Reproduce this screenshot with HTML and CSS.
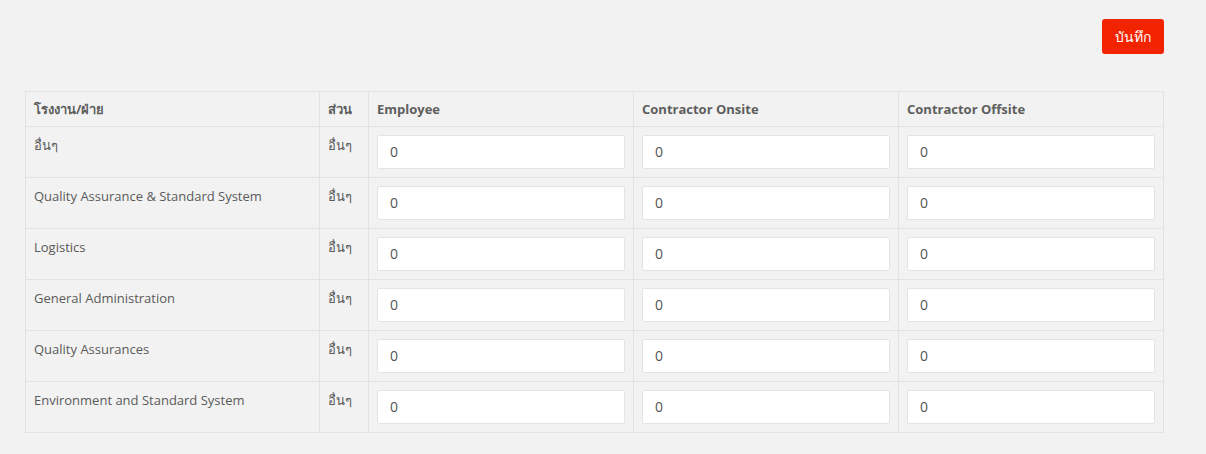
FILE: index.html
```html
<!DOCTYPE html>
<html lang="th">
<head>
<meta charset="utf-8">
<link rel="stylesheet" href="styles.css">
</head>
<body>
<div class="page">
  <div class="toolbar">
    <button class="btn-save">บันทึก</button>
  </div>
  <table class="grid">
    <colgroup>
      <col class="c-dept"><col class="c-part"><col class="c-num"><col class="c-num"><col class="c-num">
    </colgroup>
    <thead>
      <tr><th>โรงงาน/ฝ่าย</th><th>ส่วน</th><th>Employee</th><th>Contractor Onsite</th><th>Contractor Offsite</th></tr>
    </thead>
    <tbody>
      <tr><td>อื่นๆ</td><td>อื่นๆ</td><td><input class="field" value="0"></td><td><input class="field" value="0"></td><td><input class="field" value="0"></td></tr>
      <tr><td>Quality Assurance &amp; Standard System</td><td>อื่นๆ</td><td><input class="field" value="0"></td><td><input class="field" value="0"></td><td><input class="field" value="0"></td></tr>
      <tr><td>Logistics</td><td>อื่นๆ</td><td><input class="field" value="0"></td><td><input class="field" value="0"></td><td><input class="field" value="0"></td></tr>
      <tr><td>General Administration</td><td>อื่นๆ</td><td><input class="field" value="0"></td><td><input class="field" value="0"></td><td><input class="field" value="0"></td></tr>
      <tr><td>Quality Assurances</td><td>อื่นๆ</td><td><input class="field" value="0"></td><td><input class="field" value="0"></td><td><input class="field" value="0"></td></tr>
      <tr><td>Environment and Standard System</td><td>อื่นๆ</td><td><input class="field" value="0"></td><td><input class="field" value="0"></td><td><input class="field" value="0"></td></tr>
    </tbody>
  </table>
</div>
</body>
</html>
```
FILE: styles.css
```css
html, body {
  margin: 0;
  padding: 0;
  background: #f2f2f2;
}
body {
  font-family: "Open Sans", "Noto Sans", "DejaVu Sans", sans-serif;
  font-size: 13px;
  line-height: 20px;
  color: #5a5a5a;
}
.page {
  padding: 19px 42px 20px 25px;
}
.toolbar {
  display: flex;
  justify-content: flex-end;
  margin-bottom: 37px;
}
.btn-save {
  width: 62px;
  height: 35px;
  background: #f22400;
  color: #fff;
  border: none;
  border-radius: 3px;
  font-family: inherit;
  font-size: 14px;
  padding: 0;
}
.grid {
  width: 100%;
  border-collapse: collapse;
  table-layout: fixed;
  border: 1px solid #e2e2e2;
}
.c-dept { width: 294px; }
.c-part { width: 49px; }
.grid th, .grid td {
  border: 1px solid #e2e2e2;
  padding: 8px;
  text-align: left;
  vertical-align: top;
}
.grid th {
  font-weight: 700;
  color: #5e5e5e;
  padding: 7px 8px;
}
.field {
  display: block;
  box-sizing: border-box;
  width: 100%;
  height: 34px;
  background: #fff;
  border: 1px solid #e4e4e4;
  border-radius: 2px;
  padding: 0 12px 2px;
  font-family: inherit;
  font-size: 14px;
  color: #555;
  margin: 0;
}
```
